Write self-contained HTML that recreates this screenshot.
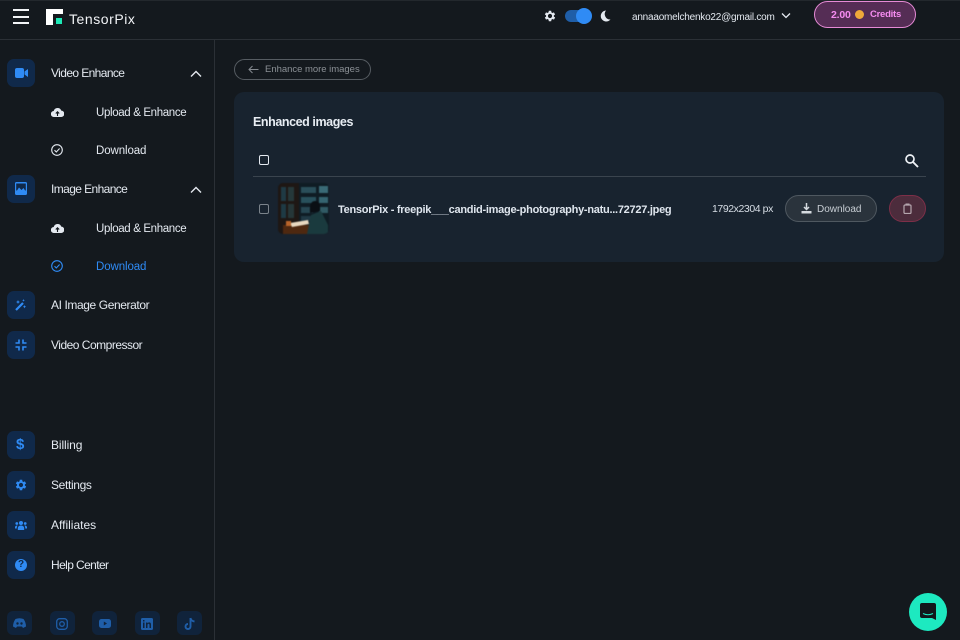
<!DOCTYPE html>
<html><head><meta charset="utf-8"><style>
html,body{margin:0;padding:0}
body{width:960px;height:640px;background:#14191e;overflow:hidden;position:relative;font-family:"Liberation Sans",sans-serif;color:#e6ebf2}
.a{position:absolute}
.t{position:absolute;white-space:nowrap;font-size:12px;line-height:16px;color:#e4e9f0}
.b{font-weight:700}
.ib{position:absolute;left:7px;width:28px;height:28px;border-radius:7px;background:#10294a}
.sb{position:absolute;top:611px;width:25px;height:24px;border-radius:6px;background:#10233b}
svg{position:absolute;display:block}
</style></head><body>
<div class="a" style="left:0;top:0;width:960px;height:1px;background:#23282d"></div>
<div class="a" style="left:0;top:39px;width:960px;height:1px;background:#2b3036"></div>
<div class="a" style="left:214px;top:40px;width:1px;height:600px;background:#2b3036"></div>

<div class="a" style="left:13px;top:9px;width:16px;height:2px;background:#f2f4f7"></div>
<div class="a" style="left:13px;top:16px;width:16px;height:2px;background:#f2f4f7"></div>
<div class="a" style="left:13px;top:22px;width:16px;height:2px;background:#f2f4f7"></div>

<svg style="left:46px;top:9px" width="17" height="16" viewBox="0 0 17 16"><path d="M0 0H17V5H7V16H0Z" fill="#fff"/><rect x="10" y="9" width="6" height="6" fill="#1de9b6"/></svg>
<div class="t" style="left:69px;top:11px;font-size:14px;letter-spacing:.55px;color:#f2f4f7">TensorPix</div>

<svg style="left:544px;top:10px" width="12" height="12" viewBox="3 2 20 20"><path fill="#e4e9f0" fill-rule="evenodd" d="M19.400 13a7.500 7.500 0 0 0 0-2l2.100-1.600-2-3.500-2.500 1a7.500 7.500 0 0 0-1.700-1L15 3.200h-4l-.4 2.700a7.500 7.500 0 0 0-1.700 1l-2.500-1-2 3.500L6.500 11a7.500 7.500 0 0 0 0 2l-2.100 1.600 2 3.500 2.500-1a7.500 7.500 0 0 0 1.700 1l.4 2.700h4l.4-2.700a7.500 7.500 0 0 0 1.700-1l2.500 1 2-3.500zM13 15.500a3.500 3.500 0 1 1 0-7 3.500 3.500 0 0 1 0 7z"/></svg>
<div class="a" style="left:565px;top:10px;width:24px;height:12px;border-radius:6px;background:#1f5ea8"></div>
<div class="a" style="left:576px;top:8px;width:16px;height:16px;border-radius:50%;background:#2f8bf5"></div>
<svg style="left:600px;top:10px" width="11" height="12" viewBox="0 0 11 12"><path d="M6 0.500A5.500 5.500 0 1 0 10.500 9.500 5.500 5.500 0 0 1 6 0.500Z" fill="#e4e9f0"/></svg>
<div class="t" style="left:632px;top:10px;font-size:10px;letter-spacing:-.22px">annaaomelchenko22@gmail.com</div>
<svg style="left:781px;top:12px" width="10" height="7" viewBox="0 0 10 7"><path d="M1 1.500L5 5.500 9 1.500" fill="none" stroke="#e4e9f0" stroke-width="1.300"/></svg>
<div class="a" style="left:814px;top:1px;width:100px;height:25px;border-radius:14px;background:#552d55;border:1px solid #e58ad5"></div>
<div class="t b" style="left:831px;top:7px;font-size:10.500px;letter-spacing:-.2px;color:#f58cf0">2.00</div>
<div class="a" style="left:855px;top:10px;width:9px;height:9px;border-radius:50%;background:#efa93a"></div>
<div class="t b" style="left:870px;top:7px;font-size:9.500px;letter-spacing:-.25px;color:#f58cf0">Credits</div>

<div class="ib" style="top:59px"></div>
<svg style="left:15px;top:68px" width="13" height="10" viewBox="0 0 13 10"><rect x="0" y="0" width="9" height="10" rx="2" fill="#2f8bf5"/><path d="M9.500 3.500L13 1V9L9.500 6.500Z" fill="#2f8bf5"/></svg>
<div class="t" style="left:51px;top:65px;font-size:12px;letter-spacing:-.6px">Video Enhance</div>
<svg style="left:190px;top:70px" width="12" height="8" viewBox="0 0 12 8"><path d="M1 6.500L6 1.500 11 6.500" fill="none" stroke="#e4e9f0" stroke-width="1.400"/></svg>
<svg style="left:51px;top:107px" width="13" height="10" viewBox="0 0 13 10"><path d="M3 10A3 3 0 0 1 2.700 4 4 4 0 0 1 10.300 3.600 3.200 3.200 0 0 1 10 10Z" fill="#e4e9f0"/><path d="M6.500 9V5M4.800 6.500L6.500 4.800 8.200 6.500" stroke="#14191e" stroke-width="1.100" fill="none"/></svg>
<div class="t" style="left:96px;top:105px;font-size:11.500px;letter-spacing:-.35px">Upload &amp; Enhance</div>
<svg style="left:51px;top:144px" width="12" height="12" viewBox="0 0 12 12"><circle cx="6" cy="6" r="5.300" fill="none" stroke="#e4e9f0" stroke-width="1.100"/><path d="M3.500 6.200L5.300 8 8.600 4.500" fill="none" stroke="#e4e9f0" stroke-width="1.100"/></svg>
<div class="t" style="left:96px;top:143px;font-size:11.500px;letter-spacing:-.1px">Download</div>

<div class="ib" style="top:175px"></div>
<svg style="left:15px;top:182px" width="12" height="13" viewBox="0 0 12 13"><rect width="12" height="13" rx="1.500" fill="#2f8bf5"/><rect x="1.200" y="1.500" width="9.600" height="7" fill="#10294a"/><path d="M1 10L4 5.500 6.500 8 8.500 6 11 10V12H1Z" fill="#2f8bf5"/></svg>
<div class="t" style="left:51px;top:181px;font-size:12px;letter-spacing:-.6px">Image Enhance</div>
<svg style="left:190px;top:186px" width="12" height="8" viewBox="0 0 12 8"><path d="M1 6.500L6 1.500 11 6.500" fill="none" stroke="#e4e9f0" stroke-width="1.400"/></svg>
<svg style="left:51px;top:223px" width="13" height="10" viewBox="0 0 13 10"><path d="M3 10A3 3 0 0 1 2.700 4 4 4 0 0 1 10.300 3.600 3.200 3.200 0 0 1 10 10Z" fill="#e4e9f0"/><path d="M6.500 9V5M4.800 6.500L6.500 4.800 8.200 6.500" stroke="#14191e" stroke-width="1.100" fill="none"/></svg>
<div class="t" style="left:96px;top:221px;font-size:11.500px;letter-spacing:-.35px">Upload &amp; Enhance</div>
<svg style="left:51px;top:260px" width="12" height="12" viewBox="0 0 12 12"><circle cx="6" cy="6" r="5.300" fill="none" stroke="#2f8bf5" stroke-width="1.100"/><path d="M3.500 6.200L5.300 8 8.600 4.500" fill="none" stroke="#2f8bf5" stroke-width="1.100"/></svg>
<div class="t" style="left:96px;top:259px;font-size:11.500px;letter-spacing:-.1px;color:#2f8bf5">Download</div>

<div class="ib" style="top:291px"></div>
<svg style="left:15px;top:299px" width="12" height="12" viewBox="0 0 12 12"><path d="M1 11L8 4" stroke="#2f8bf5" stroke-width="2.200"/><path d="M3 1l.6 1.400L5 3l-1.400.6L3 5l-.6-1.400L1 3l1.400-.6zM9.500 6l.5 1.200 1.200.5-1.200.5-.5 1.200-.5-1.200-1.200-.5 1.200-.5zM8.500 0l.4 1 1 .4-1 .4-.4 1-.4-1-1-.4 1-.4z" fill="#2f8bf5"/></svg>
<div class="t" style="left:51px;top:297px;font-size:12px;letter-spacing:-.4px">AI Image Generator</div>

<div class="ib" style="top:331px"></div>
<svg style="left:15px;top:339px" width="12" height="12" viewBox="0 0 12 12"><path d="M4 .5V4H.5M8 .5V4H11.500M4 11.500V8H.5M8 11.500V8H11.500" fill="none" stroke="#2f8bf5" stroke-width="1.600"/></svg>
<div class="t" style="left:51px;top:337px;font-size:12px;letter-spacing:-.5px">Video Compressor</div>

<div class="ib" style="top:431px"></div>
<div class="t b" style="left:16px;top:436px;font-size:15px;line-height:18px;color:#2f8bf5">$</div>
<div class="t" style="left:51px;top:437px;font-size:12px;letter-spacing:-.1px">Billing</div>

<div class="ib" style="top:471px"></div>
<svg style="left:15px;top:479px" width="12" height="12" viewBox="3 2 20 20"><path fill="#2f8bf5" fill-rule="evenodd" d="M19.400 13a7.500 7.500 0 0 0 0-2l2.100-1.600-2-3.500-2.500 1a7.500 7.500 0 0 0-1.700-1L15 3.200h-4l-.4 2.700a7.500 7.500 0 0 0-1.700 1l-2.500-1-2 3.500L6.500 11a7.500 7.500 0 0 0 0 2l-2.100 1.600 2 3.500 2.500-1a7.500 7.500 0 0 0 1.700 1l.4 2.700h4l.4-2.700a7.500 7.500 0 0 0 1.700-1l2.500 1 2-3.500zM13 15.500a3.500 3.500 0 1 1 0-7 3.500 3.500 0 0 1 0 7z"/></svg>
<div class="t" style="left:51px;top:477px;font-size:12px;letter-spacing:-.35px">Settings</div>

<div class="ib" style="top:511px"></div>
<svg style="left:15px;top:520px" width="12" height="11" viewBox="0 0 12 11"><circle cx="6" cy="3" r="2" fill="#2f8bf5"/><circle cx="1.800" cy="3.500" r="1.400" fill="#2f8bf5"/><circle cx="10.200" cy="3.500" r="1.400" fill="#2f8bf5"/><path d="M2.800 10V8A3.200 2.500 0 0 1 9.200 8V10Z" fill="#2f8bf5"/><path d="M0 8.500V7A2 1.700 0 0 1 2.500 5.600 4 4 0 0 0 1.800 8.500ZM12 8.500V7A2 1.700 0 0 0 9.500 5.600 4 4 0 0 1 10.200 8.500Z" fill="#2f8bf5"/></svg>
<div class="t" style="left:51px;top:517px;font-size:12px">Affiliates</div>

<div class="ib" style="top:551px"></div>
<div class="a" style="left:15px;top:559px;width:12px;height:12px;border-radius:50%;background:#2f8bf5;color:#10294a;font-size:10px;font-weight:700;line-height:12px;text-align:center">?</div>
<div class="t" style="left:51px;top:557px;font-size:12px;letter-spacing:-.6px">Help Center</div>

<div class="sb" style="left:7px"></div>
<svg style="left:13px;top:618px" width="13" height="10" viewBox="0 0 13 10"><path d="M2.500 1Q6.500-.5 10.500 1 13 4.500 13 8.500L10 10 9 8.500H4L3 10 0 8.500Q0 4.500 2.500 1Z" fill="#1f5ea8"/><circle cx="4.500" cy="5.500" r="1.200" fill="#10233b"/><circle cx="8.500" cy="5.500" r="1.200" fill="#10233b"/></svg>
<div class="sb" style="left:50px"></div>
<svg style="left:56px;top:618px" width="12" height="12" viewBox="0 0 12 12"><rect x=".7" y=".7" width="10.600" height="10.600" rx="3" fill="none" stroke="#1f5ea8" stroke-width="1.300"/><circle cx="6" cy="6" r="2.300" fill="none" stroke="#1f5ea8" stroke-width="1.300"/></svg>
<div class="sb" style="left:92px"></div>
<svg style="left:99px;top:619px" width="12" height="9" viewBox="0 0 12 9"><rect width="12" height="9" rx="2.500" fill="#1f5ea8"/><path d="M4.800 2.500L8 4.500 4.800 6.500Z" fill="#10233b"/></svg>
<div class="sb" style="left:135px"></div>
<svg style="left:141px;top:618px" width="12" height="12" viewBox="0 0 12 12"><rect width="12" height="12" rx="1.500" fill="#1f5ea8"/><rect x="2" y="4.500" width="1.500" height="5.500" fill="#10233b"/><rect x="2" y="2" width="1.500" height="1.500" fill="#10233b"/><path d="M5 4.500H6.500V5.300Q7.200 4.300 8.300 4.400 10 4.500 10 6.500V10H8.500V7Q8.500 5.800 7.600 5.800 6.500 5.800 6.500 7V10H5Z" fill="#10233b"/></svg>
<div class="sb" style="left:177px"></div>
<svg style="left:184px;top:617px" width="12" height="14" viewBox="0 0 12 14"><path d="M6.500 1V9.500A2.500 2.500 0 1 1 4 7M6.500 1Q7 4 10.500 4.500" fill="none" stroke="#1f5ea8" stroke-width="1.900"/></svg>

<div class="a" style="left:234px;top:59px;width:135px;height:19px;border:1px solid #565c62;border-radius:11px"></div>
<svg style="left:248px;top:65px" width="11" height="9" viewBox="0 0 11 9"><path d="M10.500 4.500H1M4.500 1L1 4.500 4.500 8" fill="none" stroke="#858a90" stroke-width="1"/></svg>
<div class="t" style="left:265px;top:62px;font-size:9.500px;letter-spacing:-.02px;color:#8b9095">Enhance more images</div>

<div class="a" style="left:234px;top:92px;width:710px;height:170px;border-radius:10px;background:#18232f"></div>
<div class="t b" style="left:253px;top:114px;font-size:12.500px;letter-spacing:-.42px;color:#e8edf3">Enhanced images</div>
<div class="a" style="left:259px;top:155px;width:8px;height:8px;border:1.500px solid #e4e9f0;border-radius:2px"></div>
<svg style="left:904px;top:153px" width="15" height="15" viewBox="0 0 15 15"><circle cx="6" cy="6" r="4" fill="none" stroke="#eef2f6" stroke-width="1.700"/><path d="M9 9L14 14" stroke="#eef2f6" stroke-width="1.900"/></svg>
<div class="a" style="left:253px;top:176px;width:673px;height:1px;background:#3a444e"></div>

<div class="a" style="left:259px;top:204px;width:8px;height:8px;border:1.500px solid #7b838b;border-radius:2px"></div>

<svg style="left:278px;top:183px;border-radius:5px;filter:blur(.6px)" width="51" height="51" viewBox="0 0 51 51">
<rect width="51" height="51" fill="#0f1c24"/>
<rect x="0" y="0" width="21" height="51" fill="#1e1714"/>
<rect x="3" y="4" width="5" height="14" fill="#1f3a44"/><rect x="10" y="4" width="6" height="14" fill="#25383a"/>
<rect x="3" y="21" width="5" height="14" fill="#1e3a44"/><rect x="10" y="21" width="6" height="14" fill="#253638"/>
<rect x="23" y="4" width="15" height="6" fill="#2a4e5a"/><rect x="23" y="14" width="15" height="6" fill="#28505c"/><rect x="23" y="24" width="12" height="6" fill="#264652"/><rect x="23" y="33" width="10" height="5" fill="#203844"/>
<rect x="41" y="3" width="9" height="7" fill="#3a6a76"/><rect x="41" y="14" width="9" height="6" fill="#356470"/><rect x="41" y="24" width="9" height="6" fill="#305a64"/>
<rect x="5" y="42" width="28" height="9" fill="#4e2810"/>
<path d="M12 40L30 37 31 41 14 44Z" fill="#e8d8c0"/><path d="M8 38h5v5H8z" fill="#b8642a"/>
<path d="M32 30Q31 18 37 18 43 18 42 28Z" fill="#0a0f14"/><path d="M29 51L33 32 43 28 50 42V51Z" fill="#1a3a3e"/>
</svg>
<div class="t b" style="left:338px;top:202px;font-size:11px;letter-spacing:-.27px;color:#dfe6ee">TensorPix - freepik___candid-image-photography-natu...72727.jpeg</div>
<div class="t" style="left:712px;top:201px;font-size:10.500px;letter-spacing:-.42px;color:#d6dde5">1792x2304 px</div>

<div class="a" style="left:785px;top:195px;width:90px;height:25px;border:1px solid #4f5860;border-radius:14px;background:#2a333c"></div>
<svg style="left:801px;top:203px" width="11" height="11" viewBox="0 0 11 11"><path d="M5.500 0V6M3 4L5.500 6.500 8 4" fill="none" stroke="#d6dbe0" stroke-width="1.500"/><rect x=".5" y="8" width="10" height="2.500" fill="#d6dbe0"/></svg>
<div class="t" style="left:817px;top:202px;font-size:10px;color:#c8ced4">Download</div>
<div class="a" style="left:889px;top:195px;width:35px;height:25px;border:1px solid #7d2f48;border-radius:14px;background:#4c2c3c"></div>
<svg style="left:903px;top:203px" width="9" height="11" viewBox="0 0 9 11"><rect x="1" y="2" width="7" height="8.500" rx="1" fill="none" stroke="#b5a6ae" stroke-width="1.200"/><rect x="2.500" y=".5" width="4" height="2" fill="#b5a6ae"/></svg>

<div class="a" style="left:909px;top:593px;width:38px;height:38px;border-radius:50%;background:#1de9c0"></div>
<svg style="left:920px;top:603px" width="16" height="17" viewBox="0 0 16 17"><path d="M2 0H14A2 2 0 0 1 16 2V17L12 15H2A2 2 0 0 1 0 13V2A2 2 0 0 1 2 0Z" fill="#12181c"/><path d="M3 10.500Q8 13 13 10.500" fill="none" stroke="#1de9c0" stroke-width="1"/></svg>
</body></html>
